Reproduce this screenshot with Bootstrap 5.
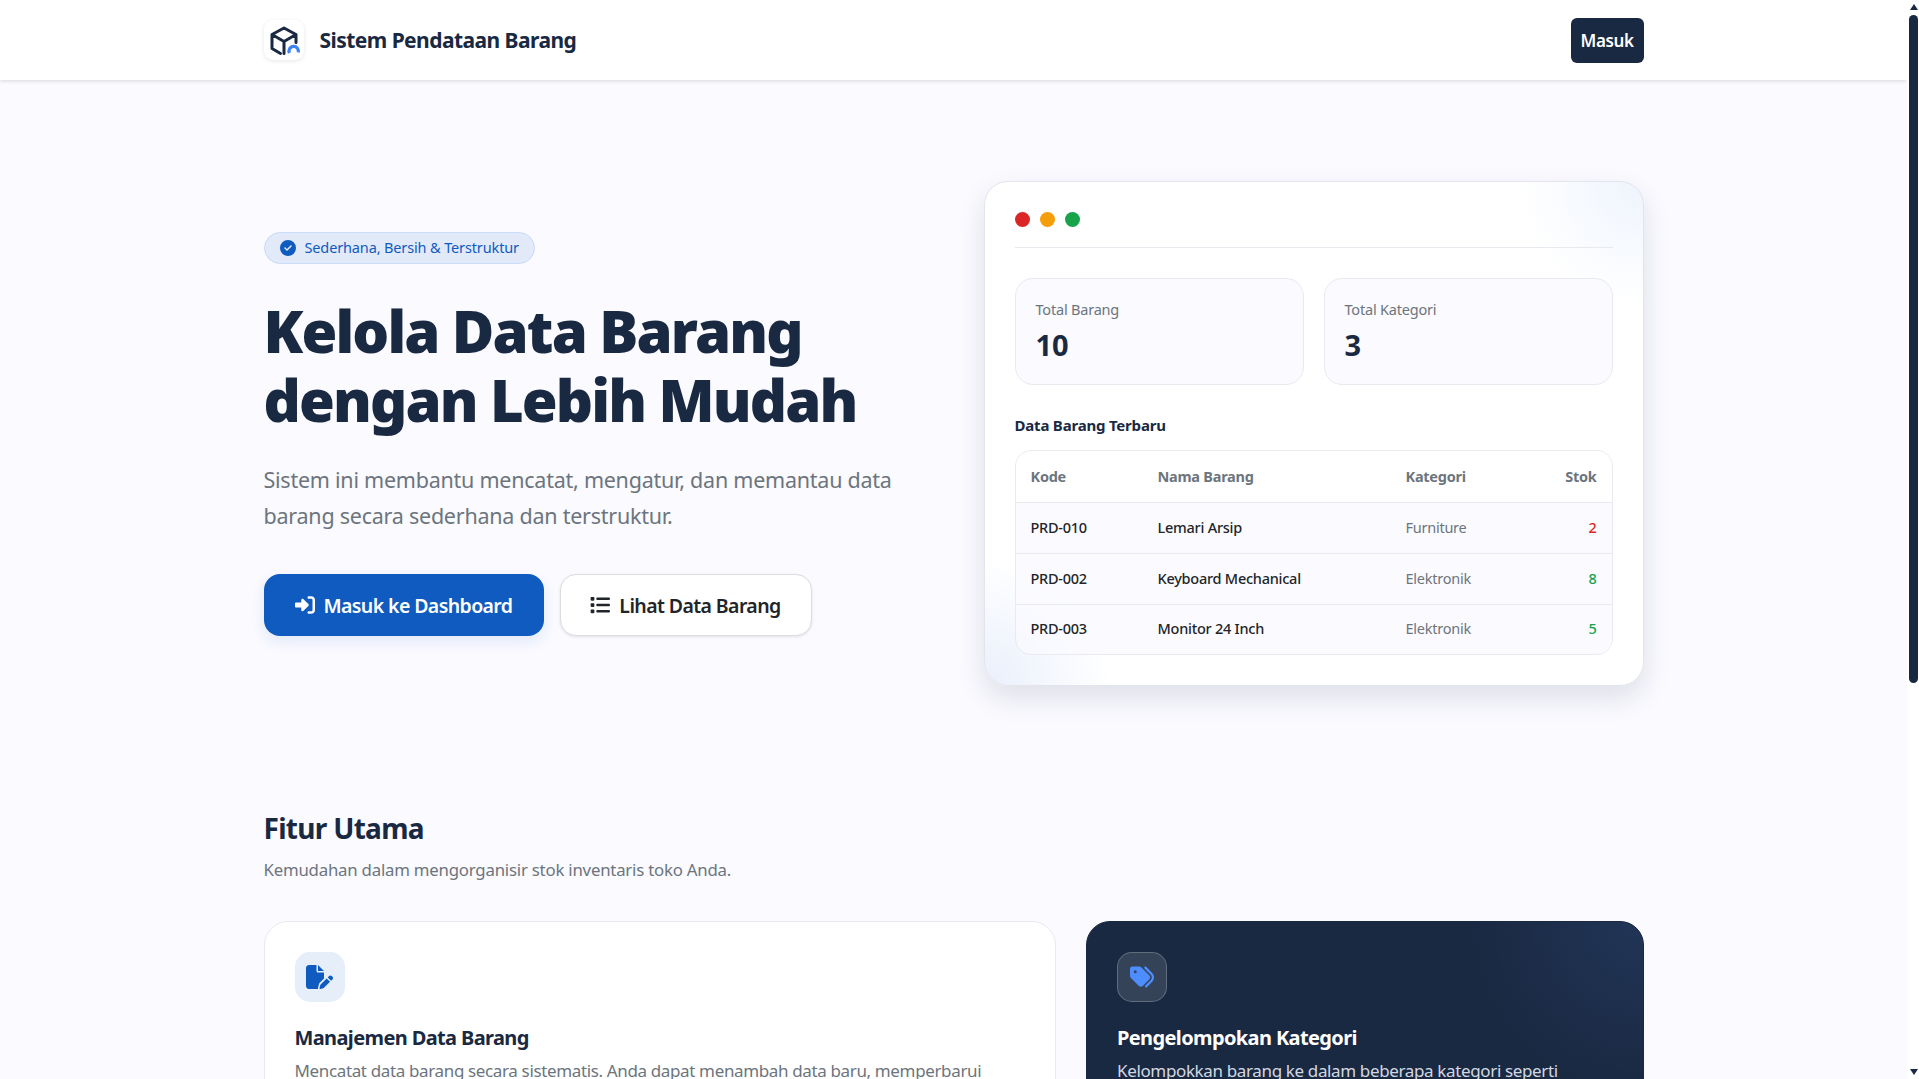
<!DOCTYPE html>
<html lang="id">
<head>
<meta charset="utf-8">
<title>Sistem Pendataan Barang</title>
<link href="https://cdn.jsdelivr.net/npm/bootstrap@5.3.0/dist/css/bootstrap.min.css" rel="stylesheet">
<style>
:root{--navy:#1a2942;--blue:#0f5bbf;--muted:#6c757d;--bg:#fafaff;--line:#e9e9f0}
body{background:var(--bg);font-family:"Noto Sans","Open Sans",sans-serif;color:#212529;padding-right:12px}
.fake-scroll{position:fixed;top:0;right:0;bottom:0;width:12px;background:#fff;z-index:10}
.fake-thumb{position:absolute;top:15px;left:2px;width:9px;height:668px;background:var(--navy);border-radius:5px}
.fake-up,.fake-down{position:absolute;left:2.5px;width:0;height:0;border-left:4px solid transparent;border-right:4px solid transparent}
.fake-up{top:4px;border-bottom:6px solid var(--navy)}
.fake-down{bottom:4px;border-top:6px solid var(--navy)}
.wrap{max-width:1380px;margin:0 auto}
.topbar{height:80px;background:#fff;box-shadow:0 1px 4px rgba(0,0,0,.14)}
.logo-box{width:40px;height:40px;border-radius:9px;background:#fff;box-shadow:0 1px 4px rgba(0,0,0,.1)}
.logo-box svg{overflow:visible}
.brand{font-size:21px;font-weight:700;color:var(--navy);letter-spacing:-.55px;padding-top:2px}
.btn-masuk{background:var(--navy);color:#fff;height:45px;width:73px;padding:2px 0 0;border-radius:6px;font-size:17px;font-weight:600;letter-spacing:-.4px}
.hero{padding-top:101px}
.hero-row{--bs-gutter-x:60px}
.pill{height:32px;padding:0 15px;border:1px solid #c9dbf7;background:#e2eafa;color:var(--blue);border-radius:16px;font-size:14.5px;letter-spacing:-.14px;gap:9px}
.pill svg{width:16px;height:16px}
h1.title{font-size:58px;line-height:69px;font-weight:900;color:var(--navy);letter-spacing:-1.85px;margin:32px 0 0}
.lead-text{font-size:21.5px;line-height:36px;color:var(--muted);margin:28px 0 40px;letter-spacing:-.24px}
.cta{height:62px;border-radius:16px;font-size:19.5px;font-weight:600;letter-spacing:-.6px;padding:0;gap:9px}
.cta span{padding-top:2px}
.cta svg{width:20px;height:20px}
.cta-primary{width:280px;background:var(--blue);color:#fff;border:0;box-shadow:0 6px 14px rgba(15,91,191,.1)}
.cta-light{width:252px;background:#fff;color:#212529;border:1px solid #dcdce2;box-shadow:0 1px 3px rgba(0,0,0,.1)}
.mock{position:relative;overflow:hidden;background:radial-gradient(circle at 100% 0,#eef4fd 0,rgba(238,244,253,0) 125px),radial-gradient(circle at 0 100%,#e9effb 0,rgba(233,239,251,0) 125px),#fff;border:1px solid #e4e4ec;border-radius:24px;padding:30px}
.mock-shell{border-radius:24px;box-shadow:0 12px 28px rgba(26,41,66,.12)}
.dots{height:36px;border-bottom:1px solid var(--line);gap:10px;margin-bottom:30px}
.dot{width:15px;height:15px;border-radius:50%}
.dot-r{background:#dc2626}.dot-y{background:#f59e0b}.dot-g{background:#16a34a}
.stat-row{gap:20px}
.stat{flex:1;height:107px;background:var(--bg);border:1px solid var(--line);border-radius:18px;padding:19px 20px}
.stat-label{font-size:14.5px;line-height:22px;color:var(--muted);letter-spacing:-.2px}
.stat-num{font-size:29px;line-height:38px;margin-top:6px;font-weight:700;color:var(--navy)}
.tbl-title{font-size:15px;font-weight:700;color:var(--navy);line-height:22px;margin:29px 0 14px;letter-spacing:-.2px}
.tbl-box{border:1px solid var(--line);border-radius:16px;overflow:hidden}
.tbl{margin:0;font-size:14.5px;letter-spacing:-.25px;table-layout:fixed;--bs-table-bg:transparent}
.tbl th,.tbl td{height:51px;padding:0 15px;vertical-align:middle;border-color:var(--line)}
.tbl th{color:var(--muted);font-weight:700;background:rgba(255,255,255,.7);padding-top:1px}
.tbl td{font-weight:500;background:rgba(250,250,255,.75)}
.tbl tr:last-child td{border-bottom:0;height:50px}
.tbl td.cat{color:var(--muted);font-weight:400}
.c1{width:127px}.c3{width:151px}.c4{width:70px}
.low{color:#dc2626}.ok{color:#16a34a}
.features{padding-top:124px;padding-bottom:120px}
.sec-title{font-size:28px;line-height:36px;font-weight:700;color:var(--navy);letter-spacing:-.7px;margin:0}
.sec-sub{font-size:16.8px;line-height:26px;color:var(--muted);margin:11px 0 38px;letter-spacing:-.21px}
.feat-row{--bs-gutter-x:30px;--bs-gutter-y:30px}
.feat{background:#fff;border:1px solid var(--line);border-radius:24px;padding:30px;height:100%;min-height:240px}
.feat-dark{background:radial-gradient(circle at 100% 0,#213557 0,rgba(33,53,87,0) 170px),var(--navy);border-color:var(--navy);color:#fff}
.feat-icon{width:50px;height:50px;border-radius:15px;background:#e5eef9;color:var(--blue)}
.feat-icon svg{height:24px}
.feat-dark .feat-icon{background:rgba(255,255,255,.12);border:1px solid rgba(255,255,255,.22);color:#4d8dff}
.feat h3{font-size:20px;line-height:28px;font-weight:700;margin:22px 0 5px;color:var(--navy);letter-spacing:-.62px}
.feat-dark h3{color:#fff}
.feat p{font-size:17px;line-height:28px;color:var(--muted);margin:0;letter-spacing:-.36px}
.feat-dark p{color:#d2d8e2}
</style>
</head>
<body>
<div class="fake-scroll" aria-hidden="true"><span class="fake-up"></span><span class="fake-thumb"></span><span class="fake-down"></span></div>
<nav class="topbar d-flex align-items-center">
  <div class="wrap w-100 d-flex align-items-center justify-content-between">
    <a class="d-flex align-items-center gap-3 text-decoration-none" href="#">
      <span class="logo-box d-flex align-items-center justify-content-center">
        <svg width="32" height="32" viewBox="0 0 32 32" fill="none">
          <path d="M12.5 29.5 4 24.5V10.5L16 4l12 6.5v8M4 10.5l12 7 12-7M16 17.5v12" stroke="#1a2942" stroke-width="3" stroke-linejoin="round" stroke-linecap="round"/>
          <path d="M21.4 29a4.7 4.7 0 1 1 8.8-.6" stroke="#3f83f0" stroke-width="3.2" fill="none"/>
        </svg>
      </span>
      <span class="brand">Sistem Pendataan Barang</span>
    </a>
    <a class="btn btn-masuk d-flex align-items-center justify-content-center" href="#">Masuk</a>
  </div>
</nav>

<section class="hero">
  <div class="wrap">
    <div class="row hero-row align-items-center">
      <div class="col-6">
        <span class="pill d-inline-flex align-items-center">
          <svg viewBox="0 0 512 512" fill="currentColor"><path d="M256 512A256 256 0 1 0 256 0a256 256 0 1 0 0 512zM369 209L241 337c-9.4 9.4-24.6 9.4-33.9 0l-64-64c-9.4-9.4-9.4-24.6 0-33.9s24.6-9.4 33.9 0l47 47L335 175c9.4-9.4 24.6-9.4 33.9 0s9.4 24.6 0 33.9z"/></svg>
          Sederhana, Bersih &amp; Terstruktur
        </span>
        <h1 class="title">Kelola Data Barang<br>dengan Lebih Mudah</h1>
        <p class="lead-text">Sistem ini membantu mencatat, mengatur, dan memantau data<br>barang secara sederhana dan terstruktur.</p>
        <div class="d-flex gap-3">
          <a class="btn cta cta-primary d-flex align-items-center justify-content-center" href="#">
            <svg viewBox="0 0 512 512" fill="currentColor"><path d="M217.9 105.9L340.7 228.7c7.2 7.2 11.3 17.1 11.3 27.3s-4.1 20.1-11.3 27.3L217.9 406.1c-6.4 6.4-15 9.9-24 9.9c-18.7 0-33.9-15.2-33.9-33.9l0-62.1L32 320c-17.7 0-32-14.3-32-32l0-64c0-17.7 14.3-32 32-32l128 0 0-62.1c0-18.7 15.2-33.9 33.9-33.9c9 0 17.6 3.6 24 9.9zM352 416l64 0c17.7 0 32-14.3 32-32l0-256c0-17.7-14.3-32-32-32l-64 0c-17.7 0-32-14.3-32-32s14.3-32 32-32l64 0c53 0 96 43 96 96l0 256c0 53-43 96-96 96l-64 0c-17.7 0-32-14.3-32-32s14.3-32 32-32z"/></svg>
            <span>Masuk ke Dashboard</span>
          </a>
          <a class="btn cta cta-light d-flex align-items-center justify-content-center" href="#">
            <svg viewBox="0 0 512 512" fill="currentColor"><path d="M40 48C26.7 48 16 58.7 16 72v48c0 13.3 10.7 24 24 24H88c13.3 0 24-10.7 24-24V72c0-13.3-10.7-24-24-24H40zM192 64c-17.7 0-32 14.3-32 32s14.3 32 32 32H480c17.7 0 32-14.3 32-32s-14.3-32-32-32H192zm0 160c-17.7 0-32 14.3-32 32s14.3 32 32 32H480c17.7 0 32-14.3 32-32s-14.3-32-32-32H192zm0 160c-17.7 0-32 14.3-32 32s14.3 32 32 32H480c17.7 0 32-14.3 32-32s-14.3-32-32-32H192zM16 232v48c0 13.3 10.7 24 24 24H88c13.3 0 24-10.7 24-24V232c0-13.3-10.7-24-24-24H40c-13.3 0-24 10.7-24 24zM40 368c-13.3 0-24 10.7-24 24v48c0 13.3 10.7 24 24 24H88c13.3 0 24-10.7 24-24V392c0-13.3-10.7-24-24-24H40z"/></svg>
            <span>Lihat Data Barang</span>
          </a>
        </div>
      </div>
      <div class="col-6">
        <div class="mock-shell">
          <div class="mock">
            <div class="dots d-flex align-items-start">
              <span class="dot dot-r"></span><span class="dot dot-y"></span><span class="dot dot-g"></span>
            </div>
            <div class="d-flex stat-row">
              <div class="stat"><div class="stat-label">Total Barang</div><div class="stat-num">10</div></div>
              <div class="stat"><div class="stat-label">Total Kategori</div><div class="stat-num">3</div></div>
            </div>
            <div class="tbl-title">Data Barang Terbaru</div>
            <div class="tbl-box">
              <table class="table tbl">
                <thead><tr><th class="c1">Kode</th><th>Nama Barang</th><th class="c3">Kategori</th><th class="c4 text-end">Stok</th></tr></thead>
                <tbody>
                  <tr><td>PRD-010</td><td>Lemari Arsip</td><td class="cat">Furniture</td><td class="text-end low">2</td></tr>
                  <tr><td>PRD-002</td><td>Keyboard Mechanical</td><td class="cat">Elektronik</td><td class="text-end ok">8</td></tr>
                  <tr><td>PRD-003</td><td>Monitor 24 Inch</td><td class="cat">Elektronik</td><td class="text-end ok">5</td></tr>
                </tbody>
              </table>
            </div>
          </div>
        </div>
      </div>
    </div>
  </div>
</section>

<section class="features">
  <div class="wrap">
    <h2 class="sec-title">Fitur Utama</h2>
    <p class="sec-sub">Kemudahan dalam mengorganisir stok inventaris toko Anda.</p>
    <div class="row feat-row">
      <div class="col-7">
        <div class="feat">
          <div class="feat-icon d-flex align-items-center justify-content-center">
            <svg viewBox="0 0 576 512" fill="currentColor"><path d="M0 64C0 28.7 28.7 0 64 0H224V128c0 17.7 14.3 32 32 32H384V285.7l-86.8 86.8c-10.3 10.3-17.5 23.1-21 37.2l-18.7 74.9c-2.3 9.2-1.8 18.8 1.3 27.5H64c-35.3 0-64-28.7-64-64V64zm384 64H256V0L384 128zM549.8 235.7l14.4 14.4c15.6 15.6 15.6 40.9 0 56.6l-29.4 29.4-71-71 29.4-29.4c15.6-15.6 40.9-15.6 56.6 0zM311.9 417L441.1 287.8l71 71L382.9 487.9c-4.1 4.1-9.2 7-14.9 8.4l-60.1 15c-5.5 1.4-11.2-.2-15.2-4.2s-5.6-9.7-4.2-15.2l15-60.1c1.4-5.6 4.3-10.8 8.4-14.9z"/></svg>
          </div>
          <h3>Manajemen Data Barang</h3>
          <p>Mencatat data barang secara sistematis. Anda dapat menambah data baru, memperbarui informasi, dan menghapus barang dengan mudah.</p>
        </div>
      </div>
      <div class="col-5">
        <div class="feat feat-dark">
          <div class="feat-icon d-flex align-items-center justify-content-center">
            <svg viewBox="0 0 512 512" fill="currentColor"><path d="M345 39.1L472.8 168.4c52.4 53 52.4 138.2 0 191.2L360.8 472.9c-9.3 9.4-24.5 9.5-33.9 .2s-9.5-24.5-.2-33.9L438.6 325.9c33.9-34.3 33.9-89.4 0-123.7L310.9 72.9c-9.3-9.4-9.2-24.6 .2-33.9s24.6-9.2 33.9 .2zM0 229.5V80C0 53.5 21.5 32 48 32H197.5c17 0 33.3 6.7 45.3 18.7l168 168c25 25 25 65.5 0 90.5L277.3 442.7c-25 25-65.5 25-90.5 0l-168-168C6.7 262.7 0 246.5 0 229.5zM144 144a32 32 0 1 0 -64 0 32 32 0 1 0 64 0z"/></svg>
          </div>
          <h3>Pengelompokan Kategori</h3>
          <p>Kelompokkan barang ke dalam beberapa kategori seperti Elektronik, Furniture, dan lainnya agar lebih rapi.</p>
        </div>
      </div>
    </div>
  </div>
</section>
<script src="https://cdn.jsdelivr.net/npm/bootstrap@5.3.0/dist/js/bootstrap.bundle.min.js"></script>
</body>
</html>
